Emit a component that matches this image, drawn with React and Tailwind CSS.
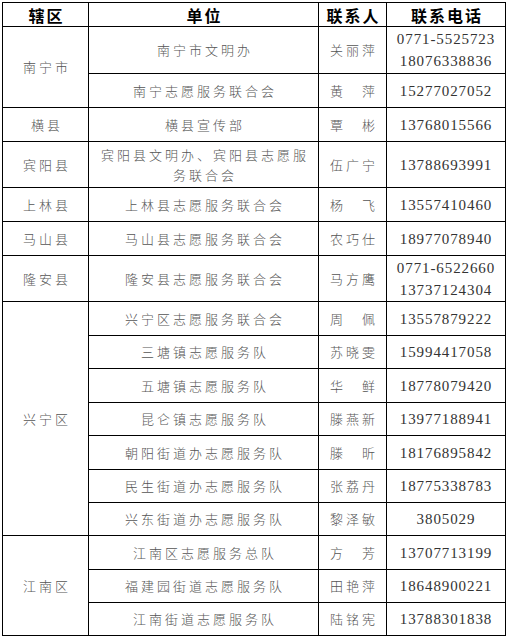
const rows = [
  { area: "南宁市", span: 2, unit: "南宁市文明办", name: "关丽萍", phone: ["0771-5525723", "18076338836"], h: "h-[47px]" },
  { unit: "南宁志愿服务联合会", name: "黄　萍", phone: ["15277027052"], h: "h-[34px]" },
  { area: "横县", span: 1, unit: "横县宣传部", name: "覃　彬", phone: ["13768015566"], h: "h-[34px]" },
  { area: "宾阳县", span: 1, unit: ["宾阳县文明办、宾阳县志愿服", "务联合会"], name: "伍广宁", phone: ["13788693991"], h: "h-[46px]" },
  { area: "上林县", span: 1, unit: "上林县志愿服务联合会", name: "杨　飞", phone: ["13557410460"], h: "h-[34px]" },
  { area: "马山县", span: 1, unit: "马山县志愿服务联合会", name: "农巧仕", phone: ["18977078940"], h: "h-[34px]" },
  { area: "隆安县", span: 1, unit: "隆安县志愿服务联合会", name: "马方鹰", phone: ["0771-6522660", "13737124304"], h: "h-[46px]" },
  { area: "兴宁区", span: 7, unit: "兴宁区志愿服务联合会", name: "周　佩", phone: ["13557879222"], h: "h-[34px]" },
  { unit: "三塘镇志愿服务队", name: "苏晓雯", phone: ["15994417058"], h: "h-[33px]" },
  { unit: "五塘镇志愿服务队", name: "华　鲜", phone: ["18778079420"], h: "h-[34px]" },
  { unit: "昆仑镇志愿服务队", name: "滕燕新", phone: ["13977188941"], h: "h-[33px]" },
  { unit: "朝阳街道办志愿服务队", name: "滕　昕", phone: ["18176895842"], h: "h-[34px]" },
  { unit: "民生街道办志愿服务队", name: "张荔丹", phone: ["18775338783"], h: "h-[33px]" },
  { unit: "兴东街道办志愿服务队", name: "黎泽敏", phone: ["3805029"], h: "h-[33px]" },
  { area: "江南区", span: 3, unit: "江南区志愿服务总队", name: "方　芳", phone: ["13707713199"], h: "h-[34px]" },
  { unit: "福建园街道志愿服务队", name: "田艳萍", phone: ["18648900221"], h: "h-[33px]" },
  { unit: "江南街道志愿服务队", name: "陆铭宪", phone: ["13788301838"], h: "h-[33px]" },
]

const cn = "font-['Noto_Sans_CJK_SC',sans-serif] font-light text-[13px] tracking-[3px] pl-[3px] text-[#555]"
const num = "font-['Liberation_Serif','Noto_Sans_CJK_SC',serif] text-[15px] tracking-[0.9px] text-[#333] leading-[22px]"
const cell = "border border-black p-0 text-center align-middle"

export default function App() {
  return (
    <div className="bg-white w-[509px] h-[640px] pt-[2px] pl-[2px]">
      <table className="border-collapse w-[503px] table-fixed">
        <colgroup>
          <col className="w-[86px]" />
          <col className="w-[230px]" />
          <col className="w-[68px]" />
          <col className="w-[119px]" />
        </colgroup>
        <thead>
          <tr className="h-[24px] font-['Noto_Sans_CJK_SC',sans-serif] font-bold text-[16px] tracking-[2px] text-black leading-none">
            <th className={cell + " pl-[2px]"}>辖区</th>
            <th className={cell + " pl-[2px]"}>单位</th>
            <th className={cell + " pl-[2px]"}>联系人</th>
            <th className={cell + " pl-[2px]"}>联系电话</th>
          </tr>
        </thead>
        <tbody>
          {rows.map((r, i) => (
            <tr key={i} className={r.h}>
              {r.area && (
                <td rowSpan={r.span} className={cell + " " + cn}>
                  {r.area}
                </td>
              )}
              <td className={cell + " " + cn + " leading-[20px]"}>
                {Array.isArray(r.unit) ? (
                  <>
                    {r.unit[0]}
                    <br />
                    {r.unit[1]}
                  </>
                ) : (
                  r.unit
                )}
              </td>
              <td className={cell + " " + cn}>{r.name}</td>
              <td className={cell + " " + num}>
                {r.phone.map((p, j) => (
                  <div key={j}>{p}</div>
                ))}
              </td>
            </tr>
          ))}
        </tbody>
      </table>
    </div>
  )
}
